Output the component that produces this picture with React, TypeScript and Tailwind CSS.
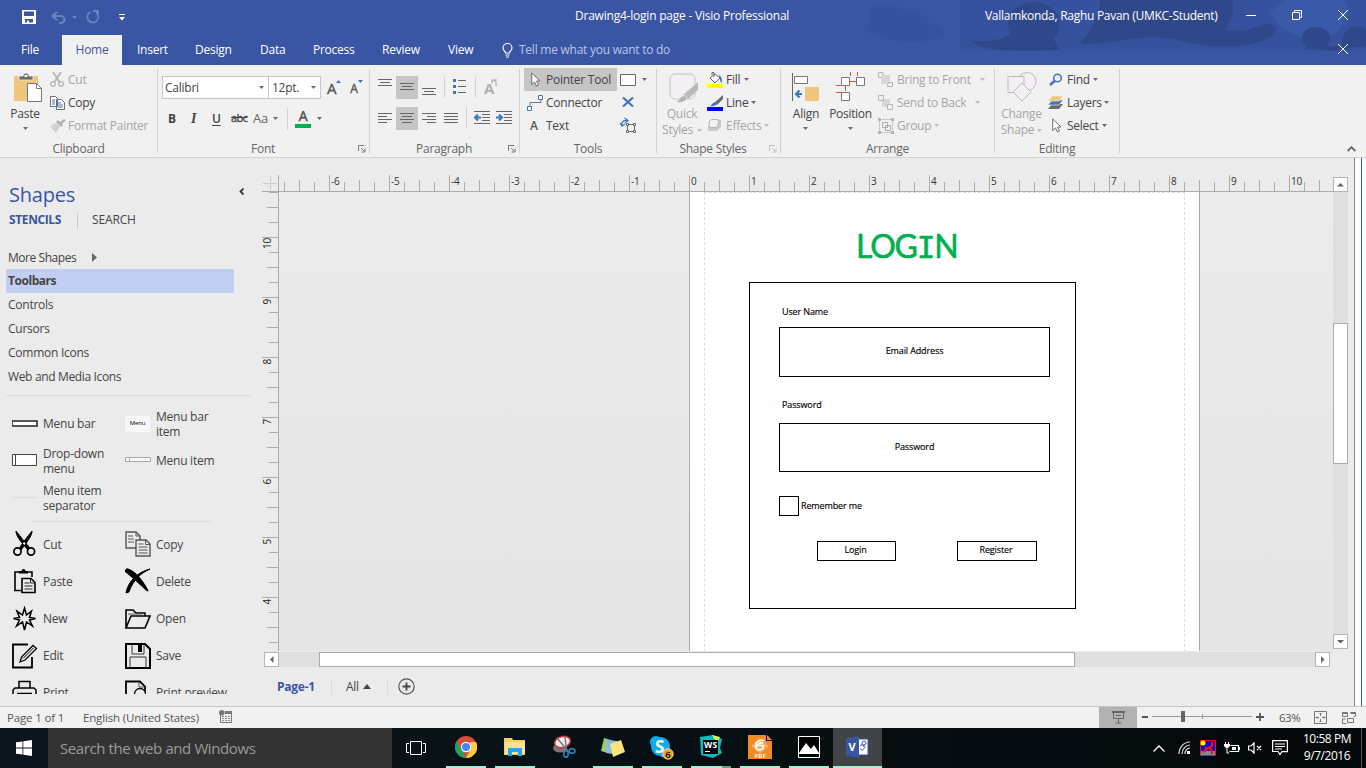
import React from "react";

type IcoProps = { w: number; h: number; className?: string; children: React.ReactNode };

function Ico({ w, h, className = "", children }: IcoProps) {
  return (
    <svg width={w} height={h} viewBox={`0 0 ${w} ${h}`} fill="none" className={`block shrink-0 ${className}`}>
      {children}
    </svg>
  );
}

function Caret({ className = "" }: { className?: string }) {
  return (
    <Ico w={5} h={3} className={className}>
      <path d="M0 0h5L2.500 3z" fill="currentColor" />
    </Ico>
  );
}

function Launcher({ className = "" }: { className?: string }) {
  return (
    <Ico w={8} h={8} className={className}>
      <path d="M.5 6V.5H6M3 3l3 3M7 3.500V7H3.500" stroke="currentColor" />
    </Ico>
  );
}

/* ---------- title bar ---------- */

function TitleArt() {
  return (
    <svg className="absolute right-0 top-0" width="506" height="52" viewBox="0 0 506 52" fill="none">
      <path d="M100 0h406v51H100z" fill="#344f99" opacity=".45" />
      <path d="M10 10c10-10 30-6 36 2 12-4 20 4 24 12 10 2 20 8 10 14-30 8-60 2-76-8 8-4 4-14 6-20z" fill="#344f99" opacity=".5" />
      <path d="M410 14c10-16 30-22 44-14h30c8 10 2 30-16 36-22 6-40 2-58-22z" fill="#3b59a9" />
      <g fill="#2f488a">
        <ellipse cx="174" cy="24" rx="26" ry="22" />
        <path d="M110 40c10 2 30 2 40-6l44-2c-2 6 2 12 6 18-30 0-78 4-90-10z" />
        <path d="M240 0h132c4 12-2 22-8 30 14 2 30 0 40-6 12-1 16 6 8 12-20 12-50 12-78 8-30-8-52-8-76-3-18 2-26 4-38 2 10-10 20-28 20-43z" />
        <path d="M483 50c-2-6-2-22 14-24 10 0 10 6 10 10v12c-8-2-16-2-24 2z" />
        <ellipse cx="456" cy="38" rx="14" ry="11" />
        <path d="M444 50c4-6 10-4 20-4h20c8 2-10 6-20 4-8-2-14-2-20 0z" />
      </g>
    </svg>
  );
}

function TitleBar() {
  return (
    <div className="relative flex h-[35px] items-center text-white">
      <Ico w={14} h={14} className="ml-[22px] mt-[-1px]">
        <path d="M0 0h14v14H0z" fill="#fff" />
        <path d="M2 1.500h10V6H2zM3 9h8v3.500H3z" fill="#3955a3" />
        <path d="M5 10.500h2V13H5z" fill="#fff" />
      </Ico>
      <Ico w={15} h={13} className="ml-[15px] mt-[-1px]">
        <path d="M6 1 1.500 5 6 9M2 5h7.500a4 3.500 0 010 7H8" stroke="#6b82c3" strokeWidth="2.200" />
      </Ico>
      <Caret className="ml-[6px] mt-[-1px] text-[#6b82c3]" />
      <Ico w={14} h={14} className="ml-[9px] mt-[-1px]">
        <path d="M4.500 2A5.500 5.500 0 1010 2.500M7 1h5v5" stroke="#6b82c3" strokeWidth="1.800" />
      </Ico>
      <Ico w={6} h={7} className="ml-[19px] mt-[-1px]">
        <path d="M0 .5h6" stroke="#fff" />
        <path d="M0 3h6L3 6.500z" fill="#fff" />
      </Ico>
      <span className="ml-[450px] mt-[-4px] w-[410px] tracking-[-0.22px]">Drawing4-login page - Visio Professional</span>
      <span className="mt-[-4px] w-[261px] tracking-[-0.28px]">Vallamkonda, Raghu Pavan (UMKC-Student)</span>
      <Ico w={10} h={11} className="mt-[-5px]"><path d="M0 5.500h10" stroke="#fff" /></Ico>
      <Ico w={10} h={10} className="ml-[36px] mt-[-5px]">
        <path d="M.5 2.500h7v7h-7zM2.500 2V.5h7v7H8" stroke="#fff" />
      </Ico>
      <Ico w={10} h={10} className="ml-[36px] mt-[-5px]"><path d="m0 0 10 10M10 0 0 10" stroke="#fff" /></Ico>
    </div>
  );
}

function Tabs() {
  return (
    <div className="relative flex h-[30px] items-center text-[12px] leading-[30px] text-white">
      <span className="w-[62px] pl-[21px]">File</span>
      <span className="h-full w-[60px] bg-[#f1f1f1] text-center text-[#3955a3]">Home</span>
      <span className="w-[73px] pl-[15px]">Insert</span>
      <span className="w-[65px]">Design</span>
      <span className="w-[53px]">Data</span>
      <span className="w-[69px]">Process</span>
      <span className="w-[66px]">Review</span>
      <span className="w-[54px]">View</span>
      <Ico w={11} h={15}>
        <path d="M3.500 10C3.500 8 1 7.500 1 5a4.500 4.500 0 019 0c0 2.500-2.500 3-2.500 5zM3.500 12h4M4 14h3" stroke="#fff" strokeWidth="1.200" />
      </Ico>
      <span className="ml-[6px] grow text-[#b9c5e6]">Tell me what you want to do</span>
      <Ico w={10} h={10} className="mr-[18px] mt-[-2px]"><path d="m0 0 10 10M10 0 0 10" stroke="#fff" /></Ico>
    </div>
  );
}

/* ---------- ribbon ---------- */

type GroupProps = { title: string; className: string; launcher?: string; children: React.ReactNode };

function Group({ title, className, launcher, children }: GroupProps) {
  return (
    <div className={`flex h-[92px] shrink-0 ${className}`}>
      <div className="flex grow flex-col">
        <div className="flex h-[75px] pt-[3px]">{children}</div>
        <div className="flex h-[17px] items-center pt-px text-[#666]">
          <span className={`grow text-center ${launcher ? "pl-[10px]" : ""}`}>{title}</span>
          {launcher && <Launcher className={`mr-[3px] ${launcher}`} />}
        </div>
      </div>
      <div className="mt-[4px] h-[84px] w-px bg-[#d2d2d2]" />
    </div>
  );
}

type CmdProps = { icon: React.ReactNode; label: string; off?: boolean; caret?: string; className?: string };

function Cmd({ icon, label, off, caret, className = "" }: CmdProps) {
  return (
    <div className={`flex h-[23px] items-center ${off ? "text-[#a6a6a6]" : "text-[#444]"} ${className}`}>
      <span className="flex w-[18px] shrink-0 items-center">{icon}</span>
      <span>{label}</span>
      {caret && <Caret className={`${caret} ${off ? "text-[#bdbdbd]" : "text-[#6a6a6a]"}`} />}
    </div>
  );
}

function Clipboard() {
  return (
    <Group title="Clipboard" className="w-[158px]">
      <div className="flex w-[50px] flex-col items-center text-[#444]">
        <Ico w={29} h={31} className="ml-[4px] mt-[4px]">
          <path d="M1 4h24v25H1z" fill="#eec77c" />
          <path d="M6 8V4h4a3 3 0 016 0h4v4z" fill="#6d6d6d" stroke="#f1f1f1" strokeWidth=".8" />
          <path d="M11.500 3h3v2h-3z" fill="#fff" />
          <path d="M14.500 11.500h9l5 5v13h-14z" fill="#fff" stroke="#777" />
          <path d="M23.500 11.500v5h5" stroke="#777" />
        </Ico>
        <span className="mt-[2px] leading-[18px]">Paste</span>
        <Caret className="mt-[4px] text-[#6a6a6a]" />
      </div>
      <div>
        <Cmd off label="Cut" icon={
          <Ico w={14} h={15}>
            <path d="M3 0l6.500 10M11 0 4.500 10" stroke="#b5b5b5" strokeWidth="1.800" />
            <circle cx="3" cy="12" r="2.300" stroke="#b5b5b5" strokeWidth="1.300" />
            <circle cx="11" cy="12" r="2.300" stroke="#b5b5b5" strokeWidth="1.300" />
          </Ico>} />
        <Cmd label="Copy" icon={
          <Ico w={15} h={14}>
            <path d="M.5.5h5l2 2v8h-7zM6.500 3.500h5l3 3v7h-8z" fill="#fff" stroke="#6d6d6d" />
            <path d="M2 4h3M2 6h3M2 8h3M8 7h3M8 9h5M8 11h5" stroke="#3f76b5" />
          </Ico>} />
        <Cmd off label="Format Painter" icon={
          <Ico w={16} h={14}>
            <path d="M0 7l6-3 4 4-4 6z" fill="#d6d0d6" />
            <path d="m6 3 5 5 2-2-1-1 4-4-2-1-4 3-2-2z" fill="#b0b0b0" />
          </Ico>} />
      </div>
    </Group>
  );
}

function FontGroup() {
  return (
    <Group title="Font" className="w-[212px]" launcher="text-[#777]">
      <div className="ml-[4px] mt-[8px] text-[#444]">
        <div className="flex h-[23px] items-start">
          <div className="flex h-[23px] w-[107px] items-center justify-between border border-[#c6c6c6] bg-white pl-[2px] pr-[4px]">
            <span>Calibri</span><Caret className="text-[#6a6a6a]" />
          </div>
          <div className="flex h-[23px] w-[52px] items-center justify-between border border-l-0 border-[#c6c6c6] bg-white pl-[3px] pr-[4px]">
            <span>12pt.</span><Caret className="text-[#6a6a6a]" />
          </div>
          <span className="ml-[6px] mt-[2px] text-[15px] leading-[20px] text-[#555] [-webkit-text-stroke:0.4px]">A</span>
          <Ico w={5} h={3} className="mt-[4px]"><path d="M0 3h5L2.500 0z" fill="#3f76b5" /></Ico>
          <span className="ml-[9px] mt-[4px] text-[12px] leading-[18px] text-[#555] [-webkit-text-stroke:0.4px]">A</span>
          <Ico w={5} h={3} className="mt-[4px]"><path d="M0 0h5L2.500 3z" fill="#3f76b5" /></Ico>
        </div>
        <div className="mt-[8px] flex h-[23px] items-center">
          <span className="ml-[6px] w-[23px] font-bold">B</span>
          <span className="w-[21px] font-['Liberation_Serif'] text-[14px] font-bold italic">I</span>
          <span className="w-[19px] font-semibold underline underline-offset-2">U</span>
          <span className="w-[22px] text-[11px] tracking-[-0.6px] line-through [-webkit-text-stroke:0.3px]">abc</span>
          <span className="text-[13px] text-[#666]">Aa</span>
          <Caret className="ml-[5px] text-[#6a6a6a]" />
          <div className="ml-[9px] h-[22px] w-px bg-[#d2d2d2]" />
          <span className="ml-[7px] flex w-[16px] flex-col items-center">
            <span className="h-[15px] text-[14px] leading-[14px] text-[#555] [-webkit-text-stroke:0.5px]">A</span>
            <span className="h-[4px] w-full bg-[#00b050]" />
          </span>
          <Caret className="ml-[6px] text-[#6a6a6a]" />
        </div>
      </div>
    </Group>
  );
}

function Lines({ d, on }: { d: string; on?: boolean }) {
  return (
    <div className={`h-[23px] w-[22px] ${on ? "bg-[#c5c5c5]" : ""}`}>
      <Ico w={22} h={23}><path d={d} stroke="#666" /></Ico>
    </div>
  );
}

function Paragraph() {
  return (
    <Group title="Paragraph" className="w-[150px]" launcher="text-[#777]">
      <div className="ml-[4px] mt-[8px]">
        <div className="flex h-[23px]">
          <Lines d="M4 3.500h14M6 6.500h10M4 9.500h14" />
          <Lines on d="M4 7.500h14M6 10.500h10M4 13.500h14" />
          <Lines d="M4 12.500h14M6 15.500h10M4 18.500h14" />
          <div className="ml-[4px] h-[22px] w-px bg-[#d2d2d2]" />
          <Ico w={30} h={23}>
            <path d="M13 4.500h8M13 10.500h8M13 16.500h8" stroke="#666" />
            <path d="M8 3h3v3H8zM8 9h3v3H8zM8 15h3v3H8z" fill="#3f76b5" />
          </Ico>
          <div className="h-[22px] w-px bg-[#d2d2d2]" />
          <span className="ml-[8px] mt-[3px] text-[15px] font-bold leading-[18px] text-[#b0b0b0]">A</span>
          <Ico w={7} h={9} className="ml-[-3px] mt-[2px]"><path d="M1 5V2h5M1 2c3 0 5 2 4 6" stroke="#aaa" strokeWidth="1.200" /></Ico>
        </div>
        <div className="mt-[8px] flex h-[23px]">
          <Lines d="M4 6.500h14M4 9.500h9M4 12.500h14M4 15.500h9" />
          <Lines on d="M4 6.500h14M6 9.500h10M4 12.500h14M6 15.500h10" />
          <Lines d="M4 6.500h14M9 9.500h9M4 12.500h14M9 15.500h9" />
          <Lines d="M4 6.500h14M4 9.500h14M4 12.500h14M4 15.500h14" />
          <div className="ml-[4px] h-[22px] w-px bg-[#d2d2d2]" />
          <Ico w={24} h={23}>
            <path d="M7 4.500h16M15 7.500h8M15 10.500h8M15 13.500h8M7 16.500h16" stroke="#666" />
            <path d="M14 10.500H9M11 7.500l-3 3 3 3" stroke="#3f76b5" strokeWidth="2" />
          </Ico>
          <Ico w={22} h={23}>
            <path d="M5 4.500h16M13 7.500h8M13 10.500h8M13 13.500h8M5 16.500h16" stroke="#666" />
            <path d="M5 10.500h5M8 7.500l3 3-3 3" stroke="#3f76b5" strokeWidth="2" />
          </Ico>
        </div>
      </div>
    </Group>
  );
}

function Pointer({ className = "" }: { className?: string }) {
  return (
    <Ico w={10} h={15} className={className}>
      <path d="M.7 1v11.500L3.500 10l2 4 2-1-2-4H9z" fill="#fff" stroke="#6d6d6d" />
    </Ico>
  );
}

function Tools() {
  return (
    <Group title="Tools" className="w-[137px]">
      <div className="ml-[4px] w-[93px]">
        <Cmd className="bg-[#c5c5c5] [&>span:first-child]:w-[22px]" label="Pointer Tool" icon={<Pointer className="ml-[7px]" />} />
        <Cmd className="[&>span:first-child]:w-[22px]" label="Connector" icon={
          <Ico w={17} h={16} className="ml-[3px]">
            <path d="M3 11V7.500h11V5" stroke="#777" />
            <path d="M.5 11.500h4v4h-4zM11.500.5h4v4h-4z" fill="#fff" stroke="#3f76b5" />
          </Ico>} />
        <Cmd className="[&>span:first-child]:w-[22px]" label="Text" icon={<span className="ml-[6px] font-semibold text-[#555]">A</span>} />
      </div>
      <div className="ml-[3px]">
        <div className="flex h-[23px] items-center">
          <Ico w={16} h={12}><path d="M.5.5h15v11H.5z" fill="#fff" stroke="#666" /></Ico>
          <Caret className="ml-[6px] text-[#6a6a6a]" />
        </div>
        <div className="flex h-[23px] items-center pb-[2px]">
          <Ico w={16} h={12}><path d="m3 1.500 10 9M13 1.500l-10 9" stroke="#3f76b5" strokeWidth="2.200" /></Ico>
        </div>
        <div className="flex h-[23px] items-center">
          <Ico w={17} h={17}>
            <path d="M2 9C1 5 4 3 7 3.500M4.500 1 8 3.500 5 6M0 6l2 3 3-2" stroke="#3f76b5" strokeWidth="1.300" />
            <path d="M7.500 7.500h7v7h-7z" stroke="#666" />
            <path d="M6.500 6.500h2v2h-2zM13.500 6.500h2v2h-2zM6.500 13.500h2v2h-2zM13.500 13.500h2v2h-2z" fill="#fff" stroke="#666" />
          </Ico>
        </div>
      </div>
    </Group>
  );
}

function ShapeStyles() {
  return (
    <Group title="Shape Styles" className="w-[124px] [&_span.grow]:pl-0" launcher="text-[#bbb]">
      <div className="flex w-[50px] flex-col items-center text-[#a6a6a6]">
        <Ico w={30} h={31} className="ml-[3px] mt-[5px]">
          <rect x="1" y="1" width="25" height="25" rx="5" fill="#f4eff5" stroke="#c3c3c3" />
          <path d="M29 9v8L19 26l-5-4z" fill="#b9b9b9" />
          <path d="M8 30c2-6 6-8 9-7 3 3-2 7-9 7z" fill="#b3b3b3" stroke="#f1f1f1" strokeWidth=".7" />
        </Ico>
        <span className="mt-[2px] leading-[16px]">Quick</span>
        <span className="flex items-center leading-[16px]">Styles<Caret className="ml-[4px] text-[#bdbdbd]" /></span>
      </div>
      <div>
        <Cmd className="[&>span:first-child]:w-[19px]" label="Fill" caret="ml-[4px]" icon={
          <Ico w={16} h={16}>
            <path d="M0 12h16v4H0z" fill="#ff0" />
            <path d="M3 6l5-4 5 4-5 5z" fill="#fff" stroke="#666" />
            <path d="M7 5V.5H5V3" stroke="#666" />
            <path d="M11 3c4 1 4 4 4 8-3-2-1-5-4-8z" fill="#3f76b5" />
          </Ico>} />
        <Cmd className="[&>span:first-child]:w-[19px]" label="Line" caret="ml-[3px]" icon={
          <Ico w={16} h={16}>
            <path d="M0 12h16v4H0z" fill="#00f" />
            <path d="M16 0v4l-6 6-3-2z" fill="#6d6d6d" />
            <path d="M2 11.500C5 11 5 7 8 7.500c3 1 1 4-6 4z" fill="#3f76b5" />
          </Ico>} />
        <Cmd off className="[&>span:first-child]:w-[19px]" label="Effects" caret="ml-[3px]" icon={
          <Ico w={15} h={13}>
            <path d="M5 1h9v7l-4 4H1V8z" fill="#c9c9c9" />
            <rect x="3" y="0.500" width="9" height="8" rx="2" transform="skewX(-10)" fill="#f1f1f1" stroke="#b5b5b5" />
          </Ico>} />
      </div>
    </Group>
  );
}

function Arrange() {
  return (
    <Group title="Arrange" className="w-[214px]">
      <div className="flex w-[48px] flex-col items-center text-[#444]">
        <Ico w={28} h={29} className="ml-[2px] mt-[5px]">
          <path d="M.5 0v28" stroke="#666" />
          <path d="M2.500 3.500h13v7h-13z" fill="#fff" stroke="#777" />
          <path d="M13 14h14v14H13z" fill="#eec77c" />
          <path d="M10 21H5M7.500 17.500 4 21l3.500 3.500" stroke="#3f76b5" strokeWidth="2.200" />
        </Ico>
        <span className="ml-[2px] mt-[3px] leading-[18px]">Align</span>
        <Caret className="mt-[4px] text-[#6a6a6a]" />
      </div>
      <div className="flex w-[43px] flex-col items-center text-[#444]">
        <Ico w={30} h={30} className="mt-[4px]">
          <path d="M14.500 0v4M21.500 0v4M14 9.500h6M9.500 14v5M0 13.500h5M0 20.500h5" stroke="#d65532" />
          <path d="M5.500 5.500h8v8h-8zM20.500 5.500h8v8h-8zM5.500 20.500h8v8h-8z" fill="#fff" stroke="#777" />
        </Ico>
        <span className="mt-[3px] leading-[18px] tracking-[-0.3px]">Position</span>
        <Caret className="mt-[4px] text-[#6a6a6a]" />
      </div>
      <div className="ml-[6px]">
        <Cmd off className="[&>span:first-child]:w-[19px]" label="Bring to Front" caret="ml-[9px]" icon={
          <Ico w={16} h={16}>
            <path d="M3 3h9v9H3z" fill="#dad5da" />
            <path d="M.5 5V.5H5V3M3 5.500H.5M10 10.500h4.500v4H9.500V12" stroke="#b5b5b5" />
          </Ico>} />
        <Cmd off className="[&>span:first-child]:w-[19px]" label="Send to Back" caret="ml-[9px]" icon={
          <Ico w={16} h={16}>
            <path d="M4 4h8v8H4z" fill="#dad5da" />
            <path d="M.5.5h5v5h-5zM9.500 9.500h5v5h-5z" fill="#f1f1f1" stroke="#b5b5b5" />
          </Ico>} />
        <Cmd off className="[&>span:first-child]:w-[19px]" label="Group" caret="ml-[3px]" icon={
          <Ico w={16} h={16}>
            <path d="M1.500 1.500h13v13h-13z" stroke="#b5b5b5" strokeDasharray="2 1" />
            <path d="M4.500 4.500h5v5h-5zM7.500 7.500h5v5h-5z" stroke="#aaa" />
            <path d="M0 0h3v3H0zM13 0h3v3h-3zM0 13h3v3H0zM13 13h3v3h-3z" fill="#b5b5b5" />
          </Ico>} />
      </div>
    </Group>
  );
}

function Editing() {
  return (
    <Group title="Editing" className="w-[125px]">
      <div className="flex w-[53px] flex-col items-center text-[#a6a6a6]">
        <Ico w={30} h={31} className="mt-[4px]">
          <circle cx="20" cy="9.500" r="9" fill="#f4eff5" stroke="#bbb" />
          <path d="M1 4.500h16v16H1z" fill="#f4eff5" stroke="#bbb" />
          <path d="m15 11 9 9-9 9-9-9z" fill="#f4eff5" stroke="#bbb" />
        </Ico>
        <span className="mt-[3px] leading-[16px]">Change</span>
        <span className="flex items-center leading-[16px]">Shape<Caret className="ml-[3px] text-[#bdbdbd]" /></span>
      </div>
      <div>
        <Cmd className="[&>span:first-child]:w-[19px]" label="Find" caret="ml-[3px]" icon={
          <Ico w={14} h={13} className="ml-px">
            <circle cx="8.500" cy="5" r="3.800" stroke="#3f76b5" strokeWidth="1.500" />
            <path d="M5.500 8 1 12" stroke="#3f76b5" strokeWidth="2.400" />
          </Ico>} />
        <Cmd className="[&>span:first-child]:w-[19px]" label="Layers" caret="ml-[2px]" icon={
          <Ico w={15} h={13}>
            <path d="M4 8h11l-4 5H0z" fill="#6d6d6d" />
            <path d="M4 4h11l-4 5H0z" fill="#3f76b5" stroke="#f1f1f1" strokeWidth=".6" />
            <path d="M4 0h11l-4 5H0z" fill="#eec77c" stroke="#f1f1f1" strokeWidth=".6" />
          </Ico>} />
        <Cmd className="[&>span:first-child]:w-[19px]" label="Select" caret="ml-[3px]" icon={<Pointer className="ml-[4px]" />} />
      </div>
    </Group>
  );
}

function Ribbon() {
  return (
    <div className="flex h-[93px] shrink-0 border-b border-[#d2d2d2] bg-[#f1f1f1]">
      <Clipboard />
      <FontGroup />
      <Paragraph />
      <Tools />
      <ShapeStyles />
      <Arrange />
      <Editing />
      <div className="flex grow items-end justify-end">
        <Ico w={9} h={6} className="mb-[5px] mr-[10px]"><path d="M.7 5 4.500 1.200 8.300 5" stroke="#666" strokeWidth="1.800" /></Ico>
      </div>
    </div>
  );
}

/* ---------- shapes pane ---------- */

const shapeIcons: Record<string, React.ReactNode> = {
  "Menu bar": <Ico w={26} h={26}><path d="M0 10h25v5H0z" fill="#fff" stroke="#222" strokeWidth="1.500" /></Ico>,
  "Menu bar item": (
    <span className="flex h-[16px] w-[25px] items-center justify-center bg-[#f7f7f7] text-[6px] tracking-[-0.2px] text-black">Menu</span>
  ),
  "Drop-down menu": <Ico w={26} h={26}><path d="M.5 6.500h24v11H.5zM3.500 7v10" fill="#fff" stroke="#444" /></Ico>,
  "Menu item": <Ico w={26} h={26}><path d="M.5 9.500h25v4H.5zM4.500 9.500v4" fill="#f8f8f8" stroke="#aaa" /></Ico>,
  "Menu item separator": <Ico w={26} h={26}><path d="M0 12.500h26" stroke="#dfdfdf" strokeWidth="1.500" /></Ico>,
  Cut: (
    <Ico w={26} h={26}>
      <path d="M4 0c0 4 3 9 12 19l1-3C12 10 8 5 4 0zM20 0c0 4-3 9-11 19l-1-3C12 10 16 5 20 0z" fill="#000" stroke="#000" />
      <circle cx="5.500" cy="20.500" r="3.600" stroke="#000" strokeWidth="1.700" />
      <circle cx="19" cy="20.500" r="3.600" stroke="#000" strokeWidth="1.700" />
    </Ico>
  ),
  Copy: (
    <Ico w={26} h={26}>
      <path d="M1 1h10l4 4v12H1z" stroke="#555" strokeWidth="1.400" />
      <path d="M11 9h10l4 4v12H11z" fill="#ebebeb" stroke="#555" strokeWidth="1.400" />
      <path d="M3 5h5M3 8h6M3 11h6M13.500 13h5M13.500 16h9M13.500 19h9M13.500 22h9M11 1v4h4M20.500 9v4.500H25" stroke="#555" />
    </Ico>
  ),
  Paste: (
    <Ico w={26} h={26}>
      <path d="M9 22.500H3V4H8M16 4h4v5" stroke="#000" strokeWidth="1.600" />
      <path d="M7 5.500V3h2.500a2 2 0 014 0H16v2.500z" fill="#000" />
      <path d="M10 10.500h9l4 4v10H10z" fill="#ebebeb" stroke="#000" strokeWidth="1.600" />
      <path d="M12.500 15h5M12.500 18h8M12.500 21h8M18.500 11v4h4" stroke="#222" />
    </Ico>
  ),
  Delete: (
    <Ico w={26} h={26}>
      <path d="M2 1c7 2 15 11 21 22C16 17 8 9 0 3z" fill="#000" stroke="#000" strokeWidth="1.500" />
      <path d="M25 1C16 5 8 12 4 24l-3 1C3 13 13 4 25 1z" fill="#000" stroke="#000" />
    </Ico>
  ),
  New: (
    <Ico w={26} h={26}>
      <path d="m12.500 2 2 7 5-4-2 6.500 6 1-6 1.500 3 6-6-4-2 8-2-8-6 4 3-6-6-1.500 6-1L5 5l5.500 4z" stroke="#000" strokeWidth="1.500" />
    </Ico>
  ),
  Open: (
    <Ico w={26} h={26}>
      <path d="M1 22V4h7l3 3h9v3M1 22l5-12h19l-5 12z" stroke="#000" strokeWidth="1.600" />
      <path d="M3 8h14" stroke="#555" />
    </Ico>
  ),
  Edit: (
    <Ico w={26} h={26}>
      <path d="M16 1.500H1v23h19V14" stroke="#000" strokeWidth="1.800" />
      <path d="m8 19 1.500-5L21 2.500l3.500 3L13 17z" fill="#ebebeb" stroke="#000" strokeWidth="1.300" />
      <path d="M11 15.500 21.500 5" stroke="#000" />
    </Ico>
  ),
  Save: (
    <Ico w={26} h={26}>
      <path d="M1 1h19l5 5v19H1z" stroke="#000" strokeWidth="2" />
      <path d="M7 1v10h12V1M5 25V14h16v11" stroke="#333" />
      <path d="M13 2h4v7h-4z" fill="#000" />
    </Ico>
  ),
  Print: (
    <Ico w={26} h={26}>
      <path d="M7 8.500V1.500h11v7M1 20V10l2-2h19l2 2v10M5 13.500h15" stroke="#000" strokeWidth="1.500" />
    </Ico>
  ),
  "Print preview": (
    <Ico w={26} h={26}>
      <path d="M8 24.500H1v-23h14l5 5v5" stroke="#000" strokeWidth="1.800" />
      <path d="M14 2v5h5" stroke="#555" />
      <circle cx="15" cy="14" r="5.500" stroke="#000" strokeWidth="1.300" />
    </Ico>
  ),
};

function ShapeGrid({ names }: { names: string[] }) {
  return (
    <div className="flex flex-wrap">
      {names.map((name) => (
        <div key={name} className="flex h-[37.200px] w-[113px] shrink-0 items-center">
          <span className="w-[31px] shrink-0">{shapeIcons[name]}</span>
          <span className="w-[76px] leading-[15px]">{name}</span>
        </div>
      ))}
    </div>
  );
}

function ShapesPane() {
  return (
    <div className="flex h-full w-[262px] shrink-0 flex-col overflow-hidden text-[#444]">
      <div className="flex h-[50px] items-center pt-[23px]">
        <h1 className="ml-[9px] w-[230px] text-[20px] leading-[26px] tracking-[-0.2px] text-[#3955a3]">Shapes</h1>
        <Ico w={5} h={7} className="mt-[-6px]"><path d="M4.500.5 1.500 3.500l3 3" stroke="#333" strokeWidth="1.800" /></Ico>
      </div>
      <div className="mt-[4px] flex h-[16px] items-center">
        <span className="ml-[9px] w-[68px] font-bold tracking-[-0.38px] text-[#3955a3]">STENCILS</span>
        <span className="h-[15px] w-px bg-[#c6c6c6]" />
        <span className="ml-[14px] tracking-[-0.15px]">SEARCH</span>
      </div>
      <div className="mt-[18px] flex h-[23px] items-center pl-[8px]">
        <span className="w-[84px] tracking-[-0.45px]">More Shapes</span>
        <Ico w={5} h={9}><path d="M0 0l5 4.500L0 9z" fill="#666" /></Ico>
      </div>
      <div className="ml-[6px] flex h-[24px] w-[228px] items-center bg-[#c3cff2] pl-[2px] font-bold tracking-[-0.45px]">Toolbars</div>
      <div className="flex h-[24px] items-center pl-[8px]">Controls</div>
      <div className="flex h-[24px] items-center pl-[8px]">Cursors</div>
      <div className="flex h-[24px] items-center pl-[8px]">Common Icons</div>
      <div className="flex h-[24px] items-center pl-[8px] tracking-[-0.35px]">Web and Media Icons</div>
      <div className="ml-[6px] mt-[6px] h-px w-[245px] shrink-0 bg-[#dcdcdc]" />
      <div className="h-[298px] w-[250px] overflow-hidden pl-[12px] pt-[9px]">
        <ShapeGrid names={["Menu bar", "Menu bar item", "Drop-down menu", "Menu item", "Menu item separator"]} />
        <div className="ml-[20px] mt-[4px] h-px w-[179px] bg-[#dcdcdc]" />
        <div className="h-[4px]" />
        <ShapeGrid names={["Cut", "Copy", "Paste", "Delete", "New", "Open", "Edit", "Save", "Print", "Print preview"]} />
      </div>
    </div>
  );
}

/* ---------- drawing area ---------- */

function HorizontalRuler() {
  const ticks = Array.from({ length: 70 }, (_, i) => i - 27);
  return (
    <svg width="1071" height="17" viewBox="262 175 1071 17" className="block">
      <path d="M270.500 176v14M263 183.500h14" stroke="#ccc" />
      <path d="M262 191.500h1071" stroke="#ababab" />
      <path d="M278.500 175v17" stroke="#ababab" />
      {ticks.map((k) => (
        <path key={k} d={`M${689.5 + k * 15} ${k % 4 === 0 ? 175 : k % 2 === 0 ? 180 : 182}V191`} stroke="#ababab" />
      ))}
      {Array.from({ length: 17 }, (_, i) => i - 6).map((n) => (
        <text key={n} x={691 + n * 60} y={185} fontSize="10" fill="#333">{n}</text>
      ))}
    </svg>
  );
}

function VerticalRuler() {
  const ticks = Array.from({ length: 31 }, (_, i) => i);
  return (
    <svg width="17" height="460" viewBox="262 192 17 460" className="block shrink-0">
      <path d="M278.500 192v459" stroke="#ababab" />
      {ticks.map((i) => (
        <path key={i} d={`M${(i - 3) % 4 === 0 ? 262 : i % 2 === 1 ? 267 : 269} ${192.5 + i * 15}H278`} stroke="#ababab" />
      ))}
      {[10, 9, 8, 7, 6, 5, 4].map((n, i) => (
        <text key={n} transform={`translate(271 ${(n === 10 ? 249 : 244.5) + i * 60}) rotate(-90)`} fontSize="10" fill="#222">{n}</text>
      ))}
    </svg>
  );
}

function Canvas() {
  const box = "absolute flex items-center justify-center border border-black";
  return (
    <div className="relative h-[459px] w-[1054px] shrink-0 overflow-hidden bg-gradient-to-b from-[#ebebeb] to-[#e5e5e5] text-[9px] tracking-[-0.12px] text-black [-webkit-text-stroke:0.15px]">
      <div className="absolute left-[410px] top-0 h-[459px] w-[511px] border-x border-[#ababab] bg-white" />
      <div className="absolute left-[425px] top-0 h-[470px] w-[481px] border border-dashed border-[#dedede]" />
      <div className="absolute left-[577px] top-[34px] whitespace-nowrap font-['Lato'] text-[32px] leading-[40px] tracking-[-1.2px] text-[#00b050] [-webkit-text-stroke:0.6px]">
        LOG<span className="font-['DejaVu_Sans_Mono'] text-[31px]">I</span>N
      </div>
      <div className={`${box} left-[470px] top-[90px] h-[327px] w-[327px]`} />
      <span className="absolute left-[503px] top-[113px] leading-[14px]">User Name</span>
      <div className={`${box} left-[500px] top-[135px] h-[50px] w-[271px] pb-[2px]`}>Email Address</div>
      <span className="absolute left-[503px] top-[206px] leading-[14px]">Password</span>
      <div className={`${box} left-[500px] top-[231px] h-[49px] w-[271px] pb-[2px]`}>Password</div>
      <div className={`${box} left-[500px] top-[304px] h-[20px] w-[20px]`} />
      <span className="absolute left-[522px] top-[307px] leading-[14px]">Remember me</span>
      <div className={`${box} left-[538px] top-[349px] h-[20px] w-[79px] pb-[2px] pr-[2px]`}>Login</div>
      <div className={`${box} left-[678px] top-[349px] h-[20px] w-[80px] pb-[2px] pr-[2px]`}>Register</div>
    </div>
  );
}

function ScrollButton({ d }: { d: string }) {
  return (
    <span className="flex size-[15px] shrink-0 items-center justify-center border border-[#b5b5b5] bg-white">
      <Ico w={9} h={9}><path d={d} fill="#666" /></Ico>
    </span>
  );
}

function Workspace() {
  return (
    <div className="flex min-w-0 grow flex-col">
      <div className="flex h-[494px] pt-[17px]">
        <div className="w-[1071px] shrink-0">
          <HorizontalRuler />
          <div className="flex h-[460px]">
            <VerticalRuler />
            <Canvas />
          </div>
        </div>
        <div className="mt-[2px] flex h-[472px] w-[15px] flex-col bg-[#dfdfdf]">
          <ScrollButton d="M1 6.500h7L4.500 3z" />
          <span className="mt-[131px] h-[141px] w-[15px] border border-[#ababab] bg-white" />
          <span className="grow" />
          <ScrollButton d="M1 3h7L4.500 6.500z" />
        </div>
      </div>
      <div className="ml-[2px] flex h-[15px] w-[1066px] bg-[#dfdfdf]">
        <ScrollButton d="M6.500 1v7L3 4.500z" />
        <span className="ml-[40px] h-[15px] w-[756px] border border-[#ababab] bg-white" />
        <span className="grow" />
        <ScrollButton d="M3 1v7l3.500-3.500z" />
      </div>
      <div className="flex h-[40px] items-center text-[#444]">
        <span className="ml-[15px] w-[54px] font-bold text-[#3955a3]">Page-1</span>
        <span className="h-[16px] w-px bg-[#dadada]" />
        <span className="ml-[14px]">All</span>
        <Ico w={8} h={5} className="ml-[4px]"><path d="M0 5h8L4 0z" fill="#444" /></Ico>
        <span className="ml-[16px] h-[16px] w-px bg-[#dadada]" />
        <Ico w={17} h={17} className="ml-[10px]">
          <circle cx="8.500" cy="8.500" r="7.700" stroke="#555" strokeWidth="1.200" />
          <path d="M8.500 4.500v8M4.500 8.500h8" stroke="#444" strokeWidth="1.800" />
        </Ico>
      </div>
    </div>
  );
}

/* ---------- status bar ---------- */

function StatusBar() {
  return (
    <div className="flex h-[22px] shrink-0 items-center border-t border-[#c6c6c6] bg-[#f1f1f1] text-[11.500px] text-[#555]">
      <span className="ml-[7px] w-[76px] tracking-[-0.15px]">Page 1 of 1</span>
      <span className="w-[136px] tracking-[-0.16px]">English (United States)</span>
      <Ico w={13} h={13} className="mt-[-2px]">
        <path d="M1.500 5v7.500h11v-11H6" stroke="#777" />
        <circle cx="2.800" cy="2.800" r="2.800" fill="#777" />
        <path d="M6 1h7v3H6z" fill="#777" />
        <path d="M3 6.500h8M3 8.500h8M3 10.500h8" stroke="#888" strokeDasharray="2 1" />
      </Ico>
      <span className="grow" />
      <span className="flex h-full w-[38px] items-center justify-center bg-[#b2b2b2]">
        <Ico w={13} h={13}>
          <path d="M0 1h13" stroke="#666" strokeWidth="2" />
          <path d="M1.500 2v5.500h10V2M6.500 8v4M3.500 12h6M4 4.500h5" stroke="#666" />
        </Ico>
      </span>
      <Ico w={122} h={13} className="ml-[5px]">
        <path d="M0 6h6M114 6h8M118 2v8" stroke="#555" strokeWidth="1.800" />
        <path d="M10 5.500h100M60.500 3v5" stroke="#999" />
        <path d="M39 0h4v11h-4z" fill="#666" />
      </Ico>
      <span className="ml-[15px] w-[35px] tracking-[-0.5px]">63%</span>
      <Ico w={13} h={13}>
        <path d="M.5.5h12v12H.5zM6.500 2v3M6.500 8v3M2 6.500h3M8 6.500h3" stroke="#777" />
        <path d="m5.500 3 1-1 1 1M5.500 10l1 1 1-1M3 5.500l-1 1 1 1M10 5.500l1 1-1 1" stroke="#777" />
      </Ico>
      <Ico w={15} h={12} className="ml-[15px] mr-[9px]">
        <path d="M.5 1h5M8.500 1h5" stroke="#777" strokeWidth="2" />
        <path d="M.5.5h5v4h-5zM8.500.5h5v4h-2M.5 7v4.500h4M.5 7h3M5.500 6.500h6v4h-6z" stroke="#777" />
      </Ico>
    </div>
  );
}

/* ---------- taskbar ---------- */

type TaskProps = { children: React.ReactNode; run?: boolean; active?: boolean; split?: boolean };

function Task({ children, run = true, active, split }: TaskProps) {
  return (
    <div className={`flex h-[40px] w-[49px] shrink-0 flex-col items-center ${active ? "bg-[#404446]" : ""}`}>
      <span className="flex h-[38px] items-center">{children}</span>
      {run && (
        <span className={`flex h-[2px] bg-[#a2f0cd] ${active ? "w-full" : "w-[40px]"}`}>
          {split && <span className="ml-auto h-full w-[9px] bg-[#6c9c88]" />}
        </span>
      )}
    </div>
  );
}

function Taskbar() {
  return (
    <div className="flex h-[40px] shrink-0 items-center bg-gradient-to-r from-[#0b161d] to-[#04090b] text-white">
      <Ico w={16} h={16} className="ml-[16px]">
        <path d="M0 2.300 6.500 1.400v6.200H0zM7.300 1.300 16 0v7.600H7.300zM0 8.400h6.500v6.200L0 13.700zM7.300 8.400H16V16l-8.700-1.300z" fill="#fff" />
      </Ico>
      <div className="ml-[16px] flex h-[40px] w-[344px] items-center bg-[#333] pl-[12px] text-[15px] tracking-[-0.4px] text-[#9b9b9b]">
        Search the web and Windows
      </div>
      <Ico w={20} h={14} className="ml-[14px] mr-[15px]">
        <path d="M4.500.5h11v13h-11zM3 2.500H.5v9H3M17 2.500h2.500v9H17" stroke="#fff" />
      </Ico>
      <Task>
        <Ico w={22} h={22}>
          <circle cx="11" cy="11" r="11" fill="#dd4b3e" />
          <path d="M1.500 5.500 6.500 13l4.500 9A11 11 0 011.500 5.500z" fill="#1da362" />
          <path d="M11 22 16 12l-1-6h6A11 11 0 0111 22z" fill="#ffcd41" />
          <circle cx="11" cy="11" r="5.200" fill="#fff" />
          <circle cx="11" cy="11" r="4" fill="#4587f3" />
        </Ico>
      </Task>
      <Task>
        <Ico w={22} h={20}>
          <path d="M0 1h8l1 2h12v15H0z" fill="#f5cf5f" />
          <path d="M1 5h20v12H1z" fill="#fbe48c" />
          <path d="M4 19v-8h14v8h-4v-4H8v4z" fill="#22a7e8" />
        </Ico>
      </Task>
      <Task run={false}>
        <Ico w={24} h={24}>
          <ellipse cx="8" cy="13" rx="7" ry="4.500" fill="#777" />
          <ellipse cx="10.500" cy="7" rx="8" ry="5.500" transform="rotate(-15 10.500 7)" fill="#eee" stroke="#c8323c" strokeWidth="1.500" />
          <path d="m5 3 11 13M13 2l1.500 13" stroke="#777" strokeWidth="1.500" />
          <ellipse cx="14" cy="19" rx="2.200" ry="3.200" stroke="#3187cc" strokeWidth="1.500" />
          <ellipse cx="20" cy="16" rx="3" ry="2.200" stroke="#3187cc" strokeWidth="1.500" />
        </Ico>
      </Task>
      <Task>
        <Ico w={24} h={20}>
          <path d="m3 1 10 3-3 13-10-3z" fill="#8fcf76" />
          <path d="m6 3 10 1-1 13-10-1z" fill="#8dbbe0" />
          <path d="m9 7 11-4 4 12-12 5z" fill="#f9e57b" />
        </Ico>
      </Task>
      <Task>
        <Ico w={25} h={25}>
          <circle cx="7" cy="7" r="6" fill="#0baee8" />
          <circle cx="15" cy="16" r="6.500" fill="#0baee8" />
          <circle cx="11.500" cy="11.500" r="9.500" fill="#0baee8" />
          <text x="6" y="18" fontSize="17" fontWeight="700" fill="#fff">S</text>
          <circle cx="19" cy="19" r="5.300" fill="#f9a11b" stroke="#fff" strokeWidth=".6" />
          <text x="16.300" y="22.500" fontSize="9.500" fontWeight="600" fill="#000">6</text>
        </Ico>
      </Task>
      <Task split>
        <Ico w={24} h={24}>
          <path d="M1 2 14 0l9 4-2 9 2 5-9 5L2 20z" fill="#12b9bd" />
          <path d="m13 0 8 2-3 6z" fill="#f2ee4e" />
          <path d="M4 5h15v14H4z" fill="#050505" />
          <text x="5" y="13" fontSize="8.500" fontWeight="700" fill="#fff" textLength="13">WS</text>
          <path d="M6 16.500h5" stroke="#fff" />
        </Ico>
      </Task>
      <Task>
        <Ico w={24} h={24}>
          <path d="M0 0h18v6h6v18H0z" fill="#f68a1f" />
          <path d="M19 0v5h5z" fill="#f68a1f" />
          <path d="M12 3 21 11l-9 8-9-8z" fill="#f9a95c" />
          <path d="M16.500 5.500c-5-1-9 1-9 6.500 1.500 4 8 4 8-1.500h-4.500M15 8c-4-.5-5 1-6 4" stroke="#fff" strokeWidth="1.700" />
          <text x="6.500" y="22.800" fontSize="5.500" fontWeight="700" fill="#fff" textLength="11">PDF</text>
        </Ico>
      </Task>
      <Task>
        <Ico w={22} h={22}>
          <path d="M.5.500h21v21H.5z" fill="#000" stroke="#fff" />
          <path d="M1 17 8 7l5 6 3-4 5 8v1H1z" fill="#fff" />
        </Ico>
      </Task>
      <Task active>
        <Ico w={23} h={22}>
          <path d="M12 3h10v16H12z" fill="#fff" stroke="#3955a3" />
          <circle cx="18" cy="7" r="2" stroke="#3955a3" />
          <path d="M14 10l2-1.500 3 3-3 3-2-2M18 9v2" stroke="#3955a3" />
          <path d="m0 2.500 13-2.500v22L0 19.500z" fill="#3955a3" />
          <text x="2.500" y="15" fontSize="11" fontWeight="700" fill="#fff">V</text>
        </Ico>
      </Task>
      <span className="grow" />
      <Ico w={12} h={7}><path d="m.5 6.500 5.500-5.500 5.500 5.500" stroke="#fff" strokeWidth="1.300" /></Ico>
      <Ico w={13} h={14} className="ml-[13px]">
        <path d="M1 13C1 6 6 1 12 1M4 13c0-5 4-9 8-9M7 13c0-3 2-6 5-6" stroke="#ddd" strokeWidth="1.200" />
        <path d="M9 10h3v3H9z" fill="#fff" />
      </Ico>
      <Ico w={16} h={16} className="ml-[9px]">
        <path d="M.5.5h15v15H.5z" fill="#0a0ad8" stroke="#e11" />
        <path d="M1 11h14v4H1z" fill="#888" />
        <circle cx="3" cy="3" r="2.500" fill="#ff0" />
        <path d="M12 2v4L7 9l-4 3M9 7l3 4v3M7 9l-2-2" stroke="#e11" strokeWidth="2.200" />
      </Ico>
      <Ico w={16} h={12} className="ml-[8px]">
        <path d="M6.500 3.500h8v6h-9" stroke="#fff" strokeWidth="1.200" />
        <path d="M8 5h4v3H8zM15 5h1v3h-1z" fill="#fff" />
        <path d="M1.500 0v3M4.500 0v3M3 6v5h2" stroke="#fff" />
        <path d="M0 2h6v2L4 6H2L0 4z" fill="#fff" />
      </Ico>
      <Ico w={14} h={12} className="ml-[8px]">
        <path d="M.5 4v4H3l3 3V1L3 4zM9 4l4 4M13 4 9 8" stroke="#fff" strokeWidth="1.200" />
      </Ico>
      <Ico w={16} h={16} className="ml-[10px]">
        <path d="M.6.600h14.800v11H10L8 14.500l-2-3H.6zM3 4h10M3 6.500h10M3 9h7" stroke="#fff" strokeWidth="1.200" />
      </Ico>
      <div className="ml-[13px] flex w-[52px] flex-col items-center pb-[2px] leading-[17px] tracking-[-0.45px]">
        <span>10:58 PM</span>
        <span>9/7/2016</span>
      </div>
      <span className="ml-[8px] mr-[4px] h-full w-px bg-[#555]" />
    </div>
  );
}

export default function App() {
  return (
    <div className="flex h-[768px] w-[1366px] flex-col overflow-hidden whitespace-nowrap bg-[#ebebeb] font-['Open_Sans','Noto_Sans',sans-serif] text-[12px] tracking-[-0.25px]">
      <div className="relative h-[65px] shrink-0 bg-[#3955a3]">
        <TitleArt />
        <TitleBar />
        <Tabs />
      </div>
      <Ribbon />
      <div className="flex h-[548px] shrink-0 [&_span]:whitespace-normal">
        <ShapesPane />
        <Workspace />
        <div className="flex w-[12px] shrink-0 border-l border-[#84888f] bg-white pl-[6px]">
          <span className="h-full w-px bg-[#3955a3]" />
        </div>
      </div>
      <StatusBar />
      <Taskbar />
    </div>
  );
}
